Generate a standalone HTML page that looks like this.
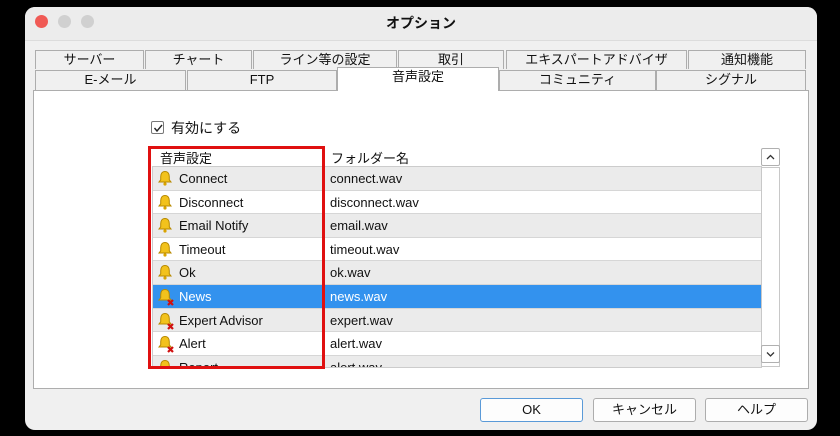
<!DOCTYPE html>
<html><head><meta charset="utf-8"><style>
*{margin:0;padding:0;box-sizing:border-box}
body{width:840px;height:436px;background:#000;position:relative;overflow:hidden;font-family:"Liberation Sans","Noto Sans CJK JP",sans-serif;font-size:13px;color:#111}
.a{position:absolute}
.win{left:25px;top:7px;width:792px;height:423px;background:#f0f0f0;border-radius:10px;overflow:hidden}
.dot{width:13px;height:13px;border-radius:50%;top:10px}
.tab{background:#f0f0f0;border:1px solid #adadad;border-bottom:none;text-align:center;font-size:13px;line-height:17px;height:19px}
.row{left:153px;width:608px;height:23.6px;border-bottom:1px solid #d6d6d6}
.c1{position:absolute;left:26px;top:4px;font-size:13px}
.c2{position:absolute;left:177px;top:4px;font-size:13px}
.bell{position:absolute;left:4px;top:3px}
.btn{top:398px;height:24px;width:103px;background:#fdfdfd;border:1px solid #adadad;border-radius:3px;text-align:center;line-height:22px;font-size:13px}
</style></head><body>
<div class="a win"></div>
<div class="a" style="left:25px;top:7px;width:792px;height:34px;background:#ececec;border-radius:10px 10px 0 0;border-bottom:1px solid #dcdcdc"></div>
<div class="a dot" style="left:35px;top:15px;background:#f05a55"></div>
<div class="a dot" style="left:58px;top:15px;background:#d0d0d0"></div>
<div class="a dot" style="left:81px;top:15px;background:#d0d0d0"></div>
<div class="a" style="left:25px;width:792px;top:13px;text-align:center;font-size:14px;font-weight:bold">オプション</div>

<div class="a tab" style="left:35px;top:50px;width:109px">サーバー</div>
<div class="a tab" style="left:145px;top:50px;width:107px">チャート</div>
<div class="a tab" style="left:253px;top:50px;width:144px">ライン等の設定</div>
<div class="a tab" style="left:398px;top:50px;width:106px">取引</div>
<div class="a tab" style="left:506px;top:50px;width:181px">エキスパートアドバイザ</div>
<div class="a tab" style="left:688px;top:50px;width:118px">通知機能</div>
<div class="a" style="left:33px;top:90px;width:776px;height:299px;background:#fff;border:1px solid #adadad"></div>
<div class="a tab" style="left:35px;top:70px;width:151px;height:20px">E-メール</div>
<div class="a tab" style="left:187px;top:70px;width:150px;height:20px">FTP</div>
<div class="a tab" style="left:337px;top:67px;width:162px;height:24px;background:#fff;border-bottom:none;line-height:18px;z-index:2">音声設定</div>
<div class="a tab" style="left:499px;top:70px;width:157px;height:20px">コミュニティ</div>
<div class="a tab" style="left:656px;top:70px;width:150px;height:20px">シグナル</div>

<div class="a" style="left:151px;top:121px;width:13px;height:13px;border:1px solid #777;border-radius:2px;background:#fff"></div>
<svg class="a" style="left:152px;top:122px" width="12" height="12"><path d="M2.5 6l2.5 3 5-6" stroke="#222" stroke-width="1.4" fill="none"/></svg>
<div class="a" style="left:171px;top:118px;font-size:14px">有効にする</div>

<div class="a" style="left:160px;top:148px;font-size:13px">音声設定</div>
<div class="a" style="left:331px;top:148px;font-size:13px">フォルダー名</div>
<div class="a" style="left:152px;top:166px;width:610px;height:202px;border-left:1px solid #ccc;border-top:1px solid #ccc"></div>

<div class="a row" style="top:167px;background:#ebebeb"><svg class="bell" width="17" height="17"><path d="M8 1.5c-3.2 0-4.3 2.7-4.3 5.3v3L2 12h12l-1.7-2.2v-3c0-2.6-1.1-5.3-4.3-5.3z" fill="#f2c21c" stroke="#b88a00"/><circle cx="8" cy="14" r="1.6" fill="#d9a300"/></svg><span class="c1">Connect</span><span class="c2">connect.wav</span></div>
<div class="a row" style="top:190.6px;background:#fff"><svg class="bell" width="17" height="17"><path d="M8 1.5c-3.2 0-4.3 2.7-4.3 5.3v3L2 12h12l-1.7-2.2v-3c0-2.6-1.1-5.3-4.3-5.3z" fill="#f2c21c" stroke="#b88a00"/><circle cx="8" cy="14" r="1.6" fill="#d9a300"/></svg><span class="c1">Disconnect</span><span class="c2">disconnect.wav</span></div>
<div class="a row" style="top:214.2px;background:#ebebeb"><svg class="bell" width="17" height="17"><path d="M8 1.5c-3.2 0-4.3 2.7-4.3 5.3v3L2 12h12l-1.7-2.2v-3c0-2.6-1.1-5.3-4.3-5.3z" fill="#f2c21c" stroke="#b88a00"/><circle cx="8" cy="14" r="1.6" fill="#d9a300"/></svg><span class="c1">Email Notify</span><span class="c2">email.wav</span></div>
<div class="a row" style="top:237.8px;background:#fff"><svg class="bell" width="17" height="17"><path d="M8 1.5c-3.2 0-4.3 2.7-4.3 5.3v3L2 12h12l-1.7-2.2v-3c0-2.6-1.1-5.3-4.3-5.3z" fill="#f2c21c" stroke="#b88a00"/><circle cx="8" cy="14" r="1.6" fill="#d9a300"/></svg><span class="c1">Timeout</span><span class="c2">timeout.wav</span></div>
<div class="a row" style="top:261.4px;background:#ebebeb"><svg class="bell" width="17" height="17"><path d="M8 1.5c-3.2 0-4.3 2.7-4.3 5.3v3L2 12h12l-1.7-2.2v-3c0-2.6-1.1-5.3-4.3-5.3z" fill="#f2c21c" stroke="#b88a00"/><circle cx="8" cy="14" r="1.6" fill="#d9a300"/></svg><span class="c1">Ok</span><span class="c2">ok.wav</span></div>
<div class="a row" style="top:285px;background:#3392ee;color:#fff"><svg class="bell" width="19" height="19"><path d="M8 1.5c-3.2 0-4.3 2.7-4.3 5.3v3L2 12h12l-1.7-2.2v-3c0-2.6-1.1-5.3-4.3-5.3z" fill="#f2c21c" stroke="#b88a00"/><path d="M11 12l5 5M16 12l-5 5" stroke="#d01010" stroke-width="2.2"/></svg><span class="c1">News</span><span class="c2">news.wav</span></div>
<div class="a row" style="top:308.6px;background:#ebebeb"><svg class="bell" width="19" height="19"><path d="M8 1.5c-3.2 0-4.3 2.7-4.3 5.3v3L2 12h12l-1.7-2.2v-3c0-2.6-1.1-5.3-4.3-5.3z" fill="#f2c21c" stroke="#b88a00"/><path d="M11 12l5 5M16 12l-5 5" stroke="#d01010" stroke-width="2.2"/></svg><span class="c1">Expert Advisor</span><span class="c2">expert.wav</span></div>
<div class="a row" style="top:332.2px;background:#fff"><svg class="bell" width="19" height="19"><path d="M8 1.5c-3.2 0-4.3 2.7-4.3 5.3v3L2 12h12l-1.7-2.2v-3c0-2.6-1.1-5.3-4.3-5.3z" fill="#f2c21c" stroke="#b88a00"/><path d="M11 12l5 5M16 12l-5 5" stroke="#d01010" stroke-width="2.2"/></svg><span class="c1">Alert</span><span class="c2">alert.wav</span></div>
<div class="a" style="left:153px;top:355.8px;width:608px;height:12px;background:#ebebeb;overflow:hidden"><svg style="position:absolute;left:4px;top:3px" width="17" height="17"><path d="M8 1.5c-3.2 0-4.3 2.7-4.3 5.3v3L2 12h12l-1.7-2.2v-3c0-2.6-1.1-5.3-4.3-5.3z" fill="#f2c21c" stroke="#b88a00"/></svg><span class="c1">Report</span><span class="c2">alert.wav</span></div>
<div class="a" style="left:153px;top:367px;width:609px;height:1px;background:#ccc"></div>

<div class="a" style="left:761px;top:167px;width:19px;height:200px;background:#fff;border:1px solid #c8c8c8"></div>
<div class="a" style="left:761px;top:148px;width:19px;height:18px;background:#fff;border:1px solid #b0b0b0;border-radius:2px"></div>
<svg class="a" style="left:765px;top:152px" width="11" height="10"><path d="M2 7l3.5-3.5L9 7" stroke="#333" stroke-width="1.3" fill="none"/></svg>
<div class="a" style="left:761px;top:345px;width:19px;height:18px;background:#fff;border:1px solid #b0b0b0;border-radius:2px"></div>
<svg class="a" style="left:765px;top:349px" width="11" height="10"><path d="M2 3.5l3.5 3.5L9 3.5" stroke="#333" stroke-width="1.3" fill="none"/></svg>

<div class="a" style="left:148px;top:146px;width:177px;height:223px;border:3px solid #e01010"></div>

<div class="a btn" style="left:480px;border-color:#5a9ad8">OK</div>
<div class="a btn" style="left:593px">キャンセル</div>
<div class="a btn" style="left:705px">ヘルプ</div>
</body></html>
